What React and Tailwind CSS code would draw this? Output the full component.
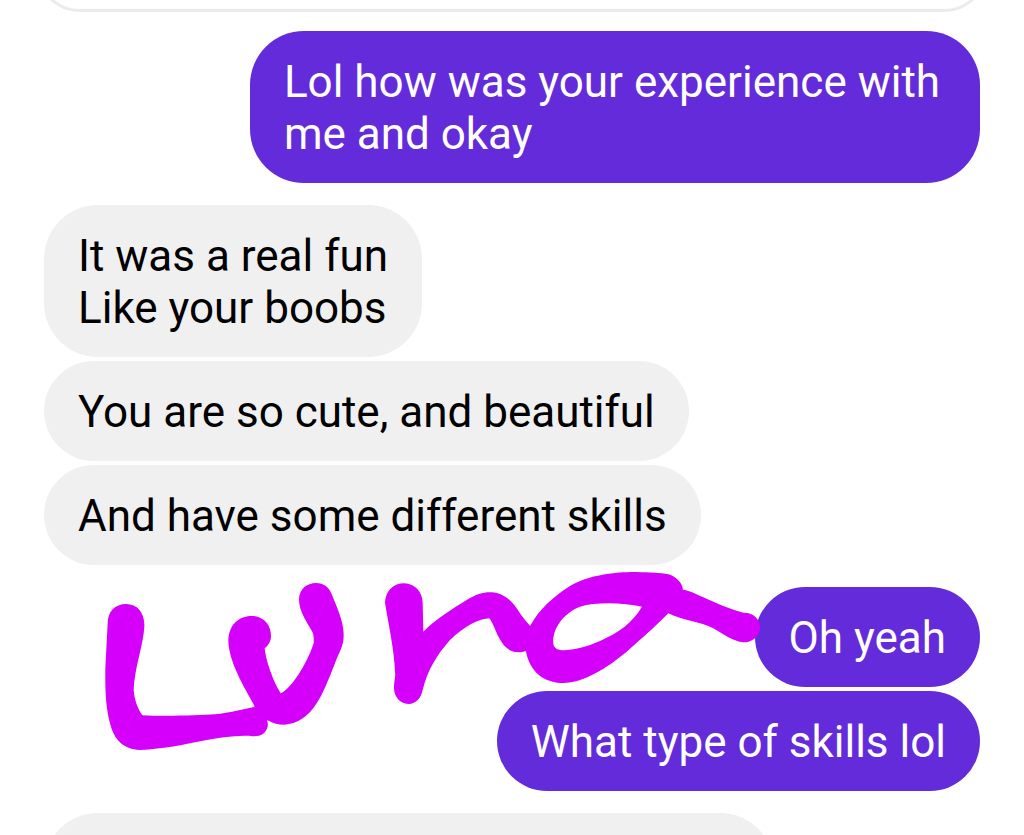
const groups = [
  { mine: true, messages: ["Lol how was your experience with me and okay"] },
  {
    mine: false,
    messages: [
      "It was a real fun\nLike your boobs",
      "You are so cute, and beautiful",
      "And have some different skills",
    ],
  },
  { mine: true, messages: ["Oh yeah", "What type of skills lol"] },
];

function Bubble({ mine, children }) {
  return (
    <li
      className={`max-w-[78%] rounded-[54px] px-[34px] pt-[25px] pb-[23px] whitespace-pre-line ${
        mine ? "self-end bg-[#642bdb] text-white" : "self-start bg-[#f0f0f0] text-black"
      }`}
    >
      {children}
    </li>
  );
}

function Scribble() {
  return (
    <svg
      role="img"
      aria-label="Luna"
      className="pointer-events-none absolute top-[565px] left-[90px] w-[680px]"
      viewBox="0 0 2040 600"
      fill="#d500fb"
    >
      <path d="M53 175C53 140 75 117 108 117C143 117 165 145 163 185C160 240 133 310 131 375C133 405 145 435 157 451C240 455 330 450 375 448C420 443 455 434 492 426C520 440 537 465 533 485C526 510 505 517 478 512C440 512 400 515 350 525C290 537 220 552 150 555C100 553 72 525 60 475C48 430 45 380 46 310Z" />
      <path d="M415 225C417 180 445 153 485 153C520 153 543 180 543 212C543 230 535 240 524 250C528 290 550 350 572 385C600 375 650 300 671 235C672 205 670 205 655 180C640 155 627 130 627 102C628 73 650 54 678 54C700 54 718 66 726 90C740 125 762 170 761 212C761 245 745 265 735 295C715 345 700 385 680 415C655 455 620 478 583 479C565 479 550 475 536 467L500 460L492 420C465 370 415 290 415 225Z" />
      <path
        transform="translate(810 -15)"
        d="M75 128C77 92 100 70 133 70C165 72 187 95 188 128L190 215C230 175 280 145 320 120C350 102 370 96 395 97C430 99 455 122 475 152C490 175 500 185 510 197L520 250L498 273C460 285 435 268 418 235C405 212 400 190 388 175C360 175 310 200 270 240C230 285 203 330 188 390C182 415 170 431 145 432C118 430 100 408 102 378C103 360 107 350 105 335C103 270 85 190 75 128Z"
      />
      <path
        transform="translate(1260 -15)"
        fillRule="evenodd"
        d="M48 275C45 240 50 215 62 195C90 145 130 110 180 78C240 42 330 35 380 36C420 37 450 38 475 43C500 50 517 70 519 89C535 90 560 103 580 112C625 132 660 148 700 158C735 158 750 180 750 203C747 232 725 247 700 247C670 245 640 222 610 205C570 185 520 182 475 160C430 205 390 240 350 275C290 325 220 368 160 369C100 368 60 335 48 275ZM130 250C127 205 160 160 210 140C260 125 340 128 396 140C365 190 330 215 270 243C225 263 180 273 150 270C138 268 131 262 130 250Z"
      />
    </svg>
  );
}

export default function App() {
  return (
    <main className="relative flex h-screen flex-col overflow-hidden bg-white px-11 font-[Roboto,sans-serif] text-[44px] leading-[52px]">
      <div className="-mx-2 mb-[19px] flex h-3 shrink-0 items-end overflow-hidden">
        <div className="h-24 w-full shrink-0 rounded-[44px] border-[3px] border-[#ebebeb]" />
      </div>
      <div className="flex flex-col gap-[22px]">
        {groups.map((group, i) => (
          <ul key={i} className="flex flex-col gap-1">
            {group.messages.map((text) => (
              <Bubble key={text} mine={group.mine}>
                {text}
              </Bubble>
            ))}
          </ul>
        ))}
        <div className="h-[152px] w-[78%] rounded-[54px] bg-[#f0f0f0]" />
      </div>
      <Scribble />
    </main>
  );
}
